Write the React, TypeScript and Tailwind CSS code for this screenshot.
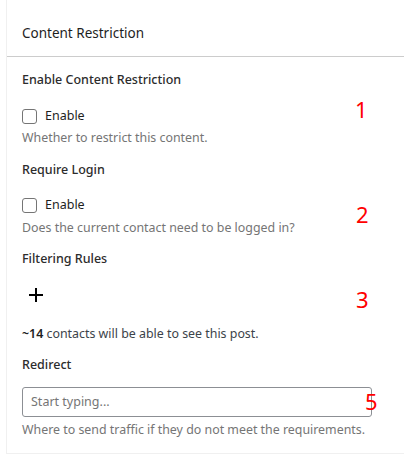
import React from "react";

const Checkbox = ({ label }: { label: string }) => (
  <label className="flex items-center gap-[8px] h-[22px]">
    <span className="w-[15px] h-[15px] rounded-[3px] border border-[#757575] bg-white" />
    <span className="text-[12.5px] text-[#1e1e1e]">{label}</span>
  </label>
);

const Marker = ({ n }: { n: string }) => (
  <span className="absolute text-[22px] leading-none text-[#ff0000]">{n}</span>
);

const PlusIcon = () => (
  <svg width="14" height="14" viewBox="0 0 14 14" shapeRendering="crispEdges">
    <rect x="6" y="0" width="2" height="14" fill="#000" />
    <rect x="0" y="6" width="14" height="2" fill="#000" />
  </svg>
);

const App = () => {
  return (
    <div
      className="w-[404px] h-[459px] bg-white"
      style={{ fontFamily: '"Noto Sans", "Open Sans", sans-serif' }}
    >
      <div className="ml-[6px] border-l border-[#f0f0f0] h-[454px] border-b">
        <div className="h-[57px] pt-[23px] px-[15px] border-b border-[#cccccc]">
          <div className="text-[13.5px] leading-[20px] text-[#1e1e1e]">Content Restriction</div>
        </div>

        <div className="px-[15px] pt-[14px] flex flex-col">
          <div className="relative">
            <div className="text-[12.5px] font-[500] text-[#2c2c2c] h-[20px]">Enable Content Restriction</div>
            <div className="mt-[14px]">
              <Checkbox label="Enable" />
            </div>
            <div className="text-[12.4px] text-[#757575] mt-[2px]">Whether to restrict this content.</div>
            <div className="absolute left-[333px] top-[27px]"><Marker n="1" /></div>
          </div>

          <div className="relative mt-[13px]">
            <div className="text-[12.5px] font-[500] text-[#2c2c2c] h-[20px]">Require Login</div>
            <div className="mt-[14px]">
              <Checkbox label="Enable" />
            </div>
            <div className="text-[12.4px] text-[#757575] mt-[2px]">Does the current contact need to be logged in?</div>
            <div className="absolute left-[334px] top-[42px]"><Marker n="2" /></div>
          </div>

          <div className="relative mt-[13px]">
            <div className="text-[12.5px] font-[500] text-[#2c2c2c] h-[20px]">Filtering Rules</div>
            <div className="h-[55px] flex items-center pl-[7px] pb-[6px]">
              <PlusIcon />
            </div>
            <div className="text-[12.4px] text-[#3c434a]">
              <span className="font-semibold text-[#1e1e1e]">~14</span> contacts will be able to see this post.
            </div>
            <div className="absolute left-[334px] top-[38px]"><Marker n="3" /></div>
          </div>

          <div className="relative mt-[12px]">
            <div className="text-[12.5px] font-[500] text-[#2c2c2c] h-[20px]">Redirect</div>
            <input
              className="mt-[11px] w-[350px] h-[30px] rounded-[3px] border border-[#8c8f94] px-[8px] text-[12.5px] text-[#1e1e1e] placeholder:text-[#757575] outline-none"
              placeholder="Start typing..."
            />
            <div className="text-[12.4px] text-[#757575] mt-[4px]">Where to send traffic if they do not meet the requirements.</div>
            <div className="absolute left-[343px] top-[34px]"><Marker n="5" /></div>
          </div>
        </div>
      </div>
    </div>
  );
};

export default App;
